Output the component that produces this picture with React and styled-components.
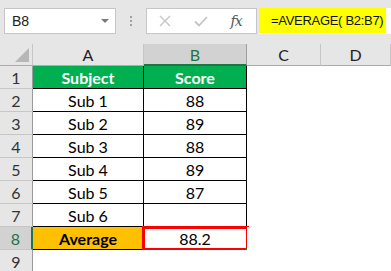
import React from "react";
import styled, { createGlobalStyle } from "styled-components";

const Global = createGlobalStyle`
  html, body { margin: 0; padding: 0; background: #ffffff; }
  * { box-sizing: border-box; }
`;

const Frame = styled.div`
  width: 391px;
  height: 271px;
  overflow: hidden;
  background: #ffffff;
  font-family: "Lato", "Liberation Sans", sans-serif;
`;

const Toolbar = styled.div`
  height: 44px;
  background: #e6e6e6;
  display: flex;
  align-items: flex-start;
  padding-top: 8px;
  padding-left: 4px;
`;

const NameBox = styled.div`
  width: 112px;
  height: 26px;
  background: #fff;
  border: 1px solid #c6c6c6;
  display: flex;
  align-items: center;
  justify-content: space-between;
  padding: 0 6px 0 7px;
  font-family: "Liberation Sans", sans-serif;
  font-size: 14px;
  color: #222;
`;

const Caret = styled.span`
  width: 0;
  height: 0;
  border-left: 4px solid transparent;
  border-right: 4px solid transparent;
  border-top: 4px solid #7a7a7a;
`;

const Dots = styled.div`
  width: 30px;
  height: 26px;
  display: flex;
  flex-direction: column;
  align-items: center;
  justify-content: center;
  gap: 2px;
  & > span {
    width: 2px;
    height: 2px;
    background: #a0a0a0;
  }
`;

const IconBox = styled.div`
  width: 111px;
  height: 26px;
  background: #fff;
  border: 1px solid #c6c6c6;
  display: flex;
  align-items: center;
  padding-left: 6px;
`;

const IconSlot = styled.div`
  width: ${(p) => p.$w}px;
  display: flex;
  align-items: center;
  justify-content: center;
`;

const Fx = styled.span`
  font-family: "DejaVu Serif", "Liberation Serif", serif;
  font-style: italic;
  font-size: 14px;
  color: #555;
  letter-spacing: -1px;
`;

const FormulaInput = styled.div`
  flex: 1;
  height: 26px;
  margin-left: 2px;
  background: #fff;
  display: flex;
`;

const FormulaText = styled.div`
  width: 127px;
  height: 25px;
  background: #ffff00;
  display: flex;
  align-items: center;
  padding-left: 12px;
  font-family: "Liberation Sans", sans-serif;
  font-size: 13px;
  letter-spacing: -0.3px;
  color: #111;
  white-space: nowrap;
`;

const Grid = styled.div`
  display: grid;
  grid-template-columns: 33px 111px 103px 74px 70px;
  grid-template-rows: 22px repeat(8, 23px) 23px;
`;

const Corner = styled.div`
  background: #e6e6e6;
  border-right: 1px solid #c6c6c6;
  border-bottom: 1px solid #ababab;
  position: relative;
  &::after {
    content: "";
    position: absolute;
    right: 3px;
    bottom: 3px;
    width: 0;
    height: 0;
    border-left: 14px solid transparent;
    border-bottom: 14px solid #b7b7b7;
  }
`;

const ColHead = styled.div`
  background: ${(p) => (p.$sel ? "#d2d2d2" : "#e6e6e6")};
  border-right: 1px solid ${(p) => (p.$sel ? "#9f9f9f" : "#c6c6c6")};
  border-bottom: ${(p) => (p.$sel ? "2px solid #217346" : "1px solid #ababab")};
  display: flex;
  align-items: center;
  justify-content: center;
  font-size: 16px;
  color: ${(p) => (p.$sel ? "#217346" : "#222")};
  padding-top: ${(p) => (p.$sel ? "1px" : "0")};
`;

const RowHead = styled.div`
  background: ${(p) => (p.$sel ? "#d2d2d2" : "#e6e6e6")};
  border-right: ${(p) => (p.$sel ? "2px solid #217346" : "1px solid #9b9b9b")};
  border-bottom: 1px solid #c6c6c6;
  display: flex;
  align-items: center;
  justify-content: center;
  font-size: 16px;
  color: ${(p) => (p.$sel ? "#217346" : "#333")};
`;

const Cell = styled.div`
  position: relative;
  background: ${(p) => p.$bg || "#fff"};
  border-right: 1px solid ${(p) => (p.$table ? "#000" : "transparent")};
  border-bottom: 1px solid ${(p) => (p.$table ? "#000" : "transparent")};
  display: flex;
  align-items: center;
  justify-content: center;
  font-size: 16px;
  font-weight: ${(p) => (p.$bold ? 700 : 400)};
  color: ${(p) => p.$color || "#000"};
`;

const Selection = styled.span`
  position: absolute;
  left: -2px;
  top: -1px;
  width: 107px;
  height: 25px;
  border: 3px solid #ff0000;
  pointer-events: none;
  &::after {
    content: "";
    position: absolute;
    right: -3px;
    bottom: -3px;
    width: 4px;
    height: 3px;
    background: #217346;
  }
`;

const rows = [
  { a: "Subject", b: "Score", head: true },
  { a: "Sub 1", b: "88" },
  { a: "Sub 2", b: "89" },
  { a: "Sub 3", b: "88" },
  { a: "Sub 4", b: "89" },
  { a: "Sub 5", b: "87" },
  { a: "Sub 6", b: "" },
  { a: "Average", b: "88.2", avg: true },
];

export default function App() {
  return (
    <Frame>
      <Global />
      <Toolbar>
        <NameBox>
          <span>B8</span>
          <Caret />
        </NameBox>
        <Dots>
          <span />
          <span />
          <span />
        </Dots>
        <IconBox>
          <IconSlot $w={24}>
            <svg width="12" height="12" viewBox="0 0 12 12">
              <path d="M1 1 L11 11 M11 1 L1 11" stroke="#c4c4c4" strokeWidth="1.4" fill="none" />
            </svg>
          </IconSlot>
          <IconSlot $w={48}>
            <svg width="14" height="11" viewBox="0 0 14 11">
              <path d="M1 5.5 L5 9.5 L13 1" stroke="#c4c4c4" strokeWidth="1.8" fill="none" />
            </svg>
          </IconSlot>
          <IconSlot $w={22}>
            <Fx>fx</Fx>
          </IconSlot>
        </IconBox>
        <FormulaInput>
          <FormulaText>=AVERAGE( B2:B7)</FormulaText>
        </FormulaInput>
      </Toolbar>
      <Grid>
        <Corner />
        <ColHead>A</ColHead>
        <ColHead $sel>B</ColHead>
        <ColHead>C</ColHead>
        <ColHead>D</ColHead>
        {rows.map((r, i) => (
          <React.Fragment key={i}>
            <RowHead $sel={r.avg}>{i + 1}</RowHead>
            <Cell
              $table
              $bg={r.head ? "#00b050" : r.avg ? "#ffc000" : "#fff"}
              $bold={r.head || r.avg}
              $color={r.head ? "#fff" : "#000"}
            >
              {r.a}
            </Cell>
            <Cell
              $table
              $bg={r.head ? "#00b050" : "#fff"}
              $bold={r.head}
              $color={r.head ? "#fff" : "#000"}
            >
              {r.b}
              {r.avg && <Selection />}
            </Cell>
            <Cell />
            <Cell />
          </React.Fragment>
        ))}
        <RowHead>9</RowHead>
        <Cell />
        <Cell />
        <Cell />
        <Cell />
      </Grid>
    </Frame>
  );
}
